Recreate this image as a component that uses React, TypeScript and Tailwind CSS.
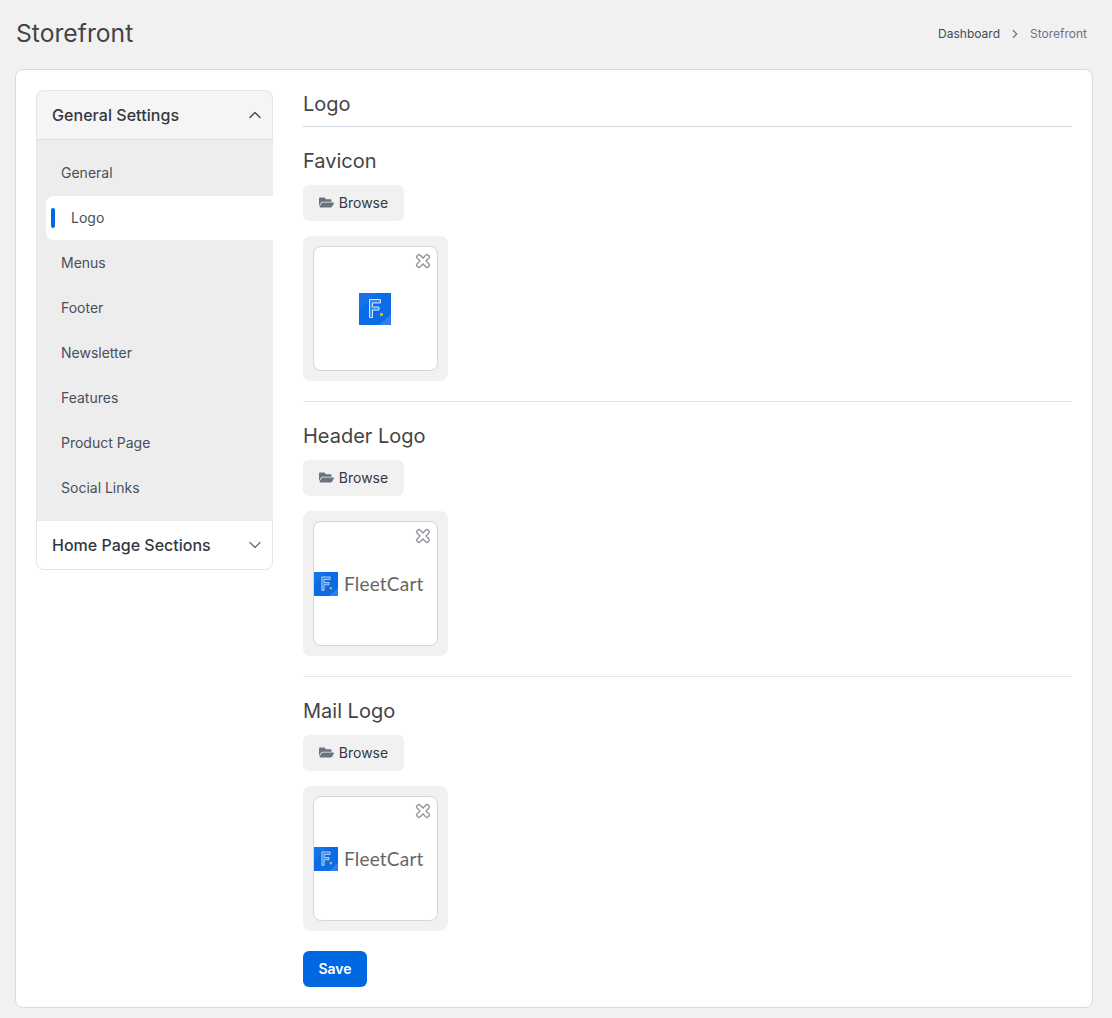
import React from 'react';
import { ChevronDown, ChevronRight, ChevronUp } from 'lucide-react';
import { FaFolderOpen } from 'react-icons/fa';

const MENU_ITEMS = ['General', 'Logo', 'Menus', 'Footer', 'Newsletter', 'Features', 'Product Page', 'Social Links'];

const LogoMark: React.FC<{ size: number }> = ({ size }) => (
  <svg width={size} height={size} viewBox="0 0 32 32" className="shrink-0">
    <rect width="32" height="32" fill="#0a6ce6" />
    <path d="M20 32 L32 21 V32 Z" fill="#2f7fe4" />
    <path d="M0 0 H18 L0 18 Z" fill="#1672e6" />
    <path
      d="M10.5 6.5 H21.5 V10 H13.5 V14 H20 V17 H13.5 V24.5 H10.5 Z"
      fill="#3d8bec"
      stroke="#d7e6fb"
      strokeWidth="1"
    />
    <rect x="21" y="20" width="3" height="3" fill="#f5a623" />
  </svg>
);

const RemoveIcon = () => (
  <svg width="16" height="16" viewBox="0 0 16 16" className="absolute top-[6px] right-[6px]">
    <path
      d="M5 2 L8 5 L11 2 Q12 1 13 2 L14 3 Q15 4 14 5 L11 8 L14 11 Q15 12 14 13 L13 14 Q12 15 11 14 L8 11 L5 14 Q4 15 3 14 L2 13 Q1 12 2 11 L5 8 L2 5 Q1 4 2 3 L3 2 Q4 1 5 2 Z"
      fill="none"
      stroke="#8d9197"
      strokeWidth="1.3"
    />
  </svg>
);

const ImagePicker: React.FC<{ title: string; full?: boolean }> = ({ title, full }) => (
  <div>
    <h4 className="text-[20px] leading-[24px] font-normal text-[#444444]">{title}</h4>
    <button className="mt-[12px] flex items-center gap-[5px] h-[36px] w-[101px] justify-center pb-px bg-[#f1f1f1] rounded-[6px] text-[14px] text-[#333844]">
      <FaFolderOpen className="text-[#6b7280] text-[15px]" />
      Browse
    </button>
    <div className="mt-[15px] w-[145px] h-[145px] p-[10px] bg-[#f1f1f1] rounded-[8px]">
      <div className="relative h-full flex items-center justify-center bg-white border border-[#d2d6de] rounded-[8px]">
        <RemoveIcon />
        {full ? (
          <div className="w-full flex items-center gap-[6px]">
            <LogoMark size={24} />
            <span className="font-['Lato',sans-serif] text-[19px] leading-none tracking-[0.2px] text-[#666666]">FleetCart</span>
          </div>
        ) : (
          <div className="mr-px">
            <LogoMark size={32} />
          </div>
        )}
      </div>
    </div>
  </div>
);

export default function App() {
  return (
    <div className="min-h-[1018px] bg-[#f1f1f1] pl-[15px] pr-[19px] font-['Inter',sans-serif]">
      <div className="flex items-center justify-between h-[69px] pl-px pr-[6px] pb-[2px]">
        <h3 className="text-[24.7px] font-normal text-[#444444]">Storefront</h3>
        <div className="flex items-center text-[12px] text-[#6b7280]">
          <span className="text-[#3f4a5a]">Dashboard</span>
          <ChevronRight className="w-[14px] h-[14px] mx-[8px] text-[#6b7280]" />
          <span>Storefront</span>
        </div>
      </div>

      <div className="flex gap-[30px] h-[939px] p-[20px] bg-white border border-[#d9d9d9] rounded-[8px]">
        <aside className="w-[237px] shrink-0 self-start">
          <div className="flex items-center justify-between h-[50px] pl-[15px] pr-[7px] pb-px bg-[#f5f5f5] border border-[#e5e5e5] border-b-[#dddddd] rounded-t-[8px]">
            <span className="text-[16px] font-[450] tracking-[0.05px] text-[#333844]">General Settings</span>
            <ChevronUp className="w-[20px] h-[20px] text-[#444444]" strokeWidth={1.6} />
          </div>
          <ul className="pt-[10px] pb-[11px] pl-[9px] bg-[#ededed] border-l border-[#e5e5e5] text-[14px] text-[#4a4f5a]">
            {MENU_ITEMS.map((item) =>
              item === 'Logo' ? (
                <li key={item} className="relative flex items-center h-[44px] mt-px pb-px pl-[25px] bg-white rounded-l-[8px]">
                  <span className="absolute left-[5px] top-[12px] w-[4px] h-[20px] rounded-[2px] bg-[#0068e1]" />
                  {item}
                </li>
              ) : (
                <li key={item} className="flex items-center h-[45px] pl-[15px]">
                  {item}
                </li>
              ),
            )}
          </ul>
          <div className="flex items-center justify-between h-[49px] pl-[15px] pr-[7px] pb-px bg-white border-x border-b border-[#e5e5e5] rounded-b-[8px]">
            <span className="text-[16px] font-[450] text-[#333844]">Home Page Sections</span>
            <ChevronDown className="w-[20px] h-[20px] text-[#6b7280]" strokeWidth={1.6} />
          </div>
        </aside>

        <main className="flex-1">
          <h3 className="text-[20px] leading-[28px] pb-[8px] font-normal text-[#444444] border-b border-[#d2d6de]">Logo</h3>
          <div className="mt-[22px]">
            <ImagePicker title="Favicon" />
          </div>
          <div className="mt-[20px] pt-[22px] border-t border-[#e5e5e5]">
            <ImagePicker title="Header Logo" full />
          </div>
          <div className="mt-[20px] pt-[22px] border-t border-[#e5e5e5]">
            <ImagePicker title="Mail Logo" full />
          </div>
          <button className="mt-[20px] w-[64px] h-[36px] pb-px bg-[#0068e1] rounded-[6px] text-[14px] font-semibold text-white">
            Save
          </button>
        </main>
      </div>
    </div>
  );
}
